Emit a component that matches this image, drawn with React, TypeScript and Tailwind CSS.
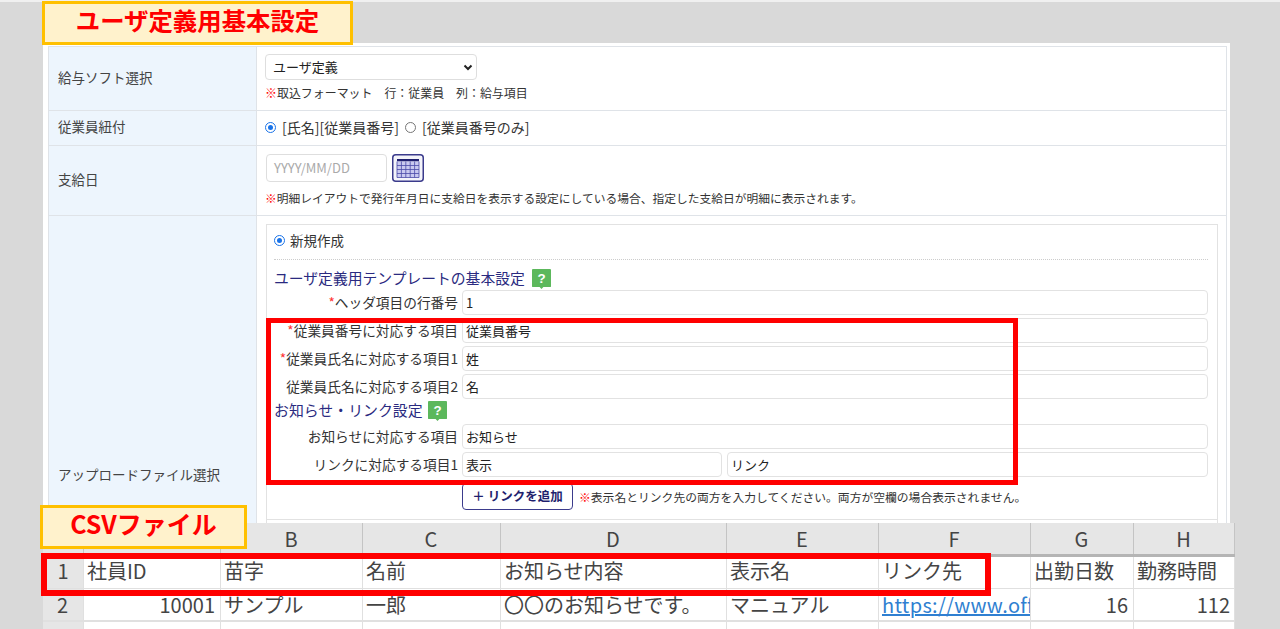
const jp = "font-['Noto_Sans_CJK_JP','Noto_Sans',sans-serif]";

function Help() {
  return (
    <svg width="19" height="21" viewBox="0 0 20 22" className="shrink-0">
      <path d="M1 0h18a1 1 0 0 1 1 1v17a1 1 0 0 1-1 1h-7l-2 2-2-2H1a1 1 0 0 1-1-1V1a1 1 0 0 1 1-1z" fill="#5cb85c" />
      <text x="10" y="15" textAnchor="middle" fontSize="14" fontWeight="700" fill="#fff" fontFamily="Liberation Sans">?</text>
    </svg>
  );
}

function CalendarIcon() {
  return (
    <svg width="32" height="28" viewBox="0 0 32 28" className="ml-[5px]">
      <rect x="0.75" y="0.75" width="30.5" height="26.5" rx="3" fill="#f4f4fa" stroke="#3b3b8c" strokeWidth="1.5" />
      <rect x="5" y="5" width="22" height="2.5" fill="#1f1f6e" />
      <rect x="5" y="7.5" width="22" height="16" fill="#c9c9f0" />
      <path d="M5 11.5h22M5 15.5h22M5 19.5h22M5 23.5h22M5 7.5v16M9.4 7.5v16M13.8 7.5v16M18.2 7.5v16M22.6 7.5v16M27 7.5v16" stroke="#4a4aa8" strokeWidth="0.8" fill="none" />
    </svg>
  );
}

function Radio({ on }: { on?: boolean }) {
  return (
    <span className={on ? "inline-block size-[11px] shrink-0 rounded-full border border-[#1a73e8] bg-white p-[2px]" : "inline-block size-[11px] shrink-0 rounded-full border border-[#767676] bg-white"}>
      {on && <span className="block size-full rounded-full bg-[#1a73e8]" />}
    </span>
  );
}

function Field({ label, req, value, second, mt }: { label: string; req?: boolean; value: string; second?: string; mt: string }) {
  return (
    <div className={`flex items-center ${mt}`}>
      <div className="w-[188px] shrink-0 whitespace-nowrap pr-1 pb-[1px] text-right text-[13.7px] leading-[24px] text-[#333]">
        {req && <span className="text-[#f33]">*</span>}
        {label}
      </div>
      <input readOnly defaultValue={value} className="h-[25px] min-w-0 flex-1 rounded-[4px] border border-[#e2e2e2] bg-white px-[3px] pb-[1px] text-[13px] text-[#222] outline-none" />
      {second && (
        <input readOnly defaultValue={second} className="ml-[5px] h-[25px] w-[481px] rounded-[4px] border border-[#e2e2e2] bg-white px-[3px] pb-[1px] text-[13px] text-[#222] outline-none" />
      )}
    </div>
  );
}

function Row({ label, h, children }: { label: string; h: string; children: React.ReactNode }) {
  return (
    <div className={`flex border-b border-[#dfe3e8] ${h}`}>
      <div className="flex w-[208px] shrink-0 items-center border-r border-[#dfe3e8] bg-[#edf5fd] pb-[3px] pl-[9px] text-[13.5px] text-[#444]">
        {label}
      </div>
      <div className="min-w-0 flex-1 bg-white pl-[8px]">{children}</div>
    </div>
  );
}

const cols = [
  { w: "w-[41px]", head: "", r1: "1", r2: "2", cls: "bg-[#e6e6e6] text-center" },
  { w: "w-[137px]", head: "A", r1: "社員ID", r2: "10001", cls: "pr-[5px] text-right" },
  { w: "w-[142px]", head: "B", r1: "苗字", r2: "サンプル", cls: "" },
  { w: "w-[138px]", head: "C", r1: "名前", r2: "一郎", cls: "" },
  { w: "w-[226px]", head: "D", r1: "お知らせ内容", r2: "〇〇のお知らせです。", cls: "" },
  { w: "w-[152px]", head: "E", r1: "表示名", r2: "マニュアル", cls: "" },
  { w: "w-[152px]", head: "F", r1: "リンク先", r2: "https://www.office", cls: "" },
  { w: "w-[103px]", head: "G", r1: "出勤日数", r2: "16", cls: "pr-[5px] text-right" },
  { w: "w-[101px]", head: "H", r1: "勤務時間", r2: "112", cls: "text-right" },
];

export default function App() {
  return (
    <div className={`relative h-[629px] w-full overflow-hidden bg-[#d9d9d9] pt-[43px] pl-[43px] ${jp}`}>
      <div className="absolute inset-x-0 top-0 h-[2px] bg-[#f0f0f0]" />

      {/* form panel */}
      <div className="h-[586px] w-[1187px] bg-white pt-[3px] pr-[3px] pl-[5px]">
        <div className="border-x border-t border-[#dfe3e8]">
          <Row label="給与ソフト選択" h="h-[64px]">
            <div className="mt-[7px] flex h-[26px] w-[212px] items-center justify-between rounded-[4px] border border-[#dedede] bg-white pr-[3px] pb-[1px] pl-[7px] text-[13px] text-[#222]">
              ユーザ定義
              <svg width="10" height="10" viewBox="0 0 10 10" fill="none" stroke="#222" strokeWidth="2"><path d="M1.5 3.5 5 7l3.5-3.5" /></svg>
            </div>
            <p className="mt-[5px] text-[11.95px] leading-[16px] whitespace-pre text-[#333]">
              <span className="font-bold text-[#f00]">※</span>取込フォーマット　行：従業員　列：給与項目
            </p>
          </Row>
          <Row label="従業員紐付" h="h-[35px]">
            <div className="flex h-full items-center pb-[2px] text-[14px] whitespace-pre text-[#333]">
              <Radio on />
              <span className="ml-[6px]">[氏名][従業員番号]</span>
              <span className="ml-[6px]"><Radio /></span>
              <span className="ml-[6px]">[従業員番号のみ]</span>
            </div>
          </Row>
          <Row label="支給日" h="h-[70px]">
            <div className="mt-[8px] ml-[1px] flex items-center">
              <div className="flex h-[28px] w-[121px] items-center rounded-[4px] border border-[#dedede] pl-[7px] text-[13px] text-[#aaa]">YYYY/MM/DD</div>
              <CalendarIcon />
            </div>
            <p className="mt-[8px] text-[11.75px] leading-[16px] text-[#333]">
              <span className="font-bold text-[#f00]">※</span>明細レイアウトで発行年月日に支給日を表示する設定にしている場合、指定した支給日が明細に表示されます。
            </p>
          </Row>
          <div className="flex h-[400px]">
            <div className="w-[208px] shrink-0 border-r border-[#dfe3e8] bg-[#edf5fd] pt-[248px] pl-[9px] text-[13.5px] text-[#444]">
              アップロードファイル選択
            </div>
            <div className="min-w-0 flex-1 bg-white pt-[8px] pl-[9px]">
              <div className="h-[320px] w-[952px] border border-[#e2e2e2] pr-[9px] pl-[7px]">
                <div className="flex h-[35px] items-center border-b border-dotted border-[#ccc] pb-[4px] text-[13.5px] text-[#333]">
                  <span className="mr-[5px]"><Radio on /></span>新規作成
                </div>
                <div className="mt-[8px] flex items-center text-[14.8px] leading-[20px] text-[#2a2a80]">
                  <span className="pb-[3px]">ユーザ定義用テンプレートの基本設定</span>
                  <span className="ml-[7px]"><Help /></span>
                </div>
                <Field mt="-mt-[1px]" req label="ヘッダ項目の行番号" value="1" />
                <Field mt="mt-[3px]" req label="従業員番号に対応する項目" value="従業員番号" />
                <Field mt="mt-[3px]" req label="従業員氏名に対応する項目1" value="姓" />
                <Field mt="mt-[3px]" label="従業員氏名に対応する項目2" value="名" />
                <div className="mt-[1px] flex items-center text-[14.9px] leading-[20px] text-[#2a2a80]">
                  <span className="pb-[2px]">お知らせ・リンク設定</span>
                  <span className="ml-[5px]"><Help /></span>
                </div>
                <Field mt="mt-[2px]" label="お知らせに対応する項目" value="お知らせ" />
                <Field mt="mt-[3px]" label="リンクに対応する項目1" value="表示" second="リンク" />
                <div className="mt-[6px] flex items-center pl-[188px]">
                  <div className="flex h-[27px] w-[111px] items-center justify-center rounded-[4px] border border-[#3b3b8c] pb-[1px] text-[12.5px] font-bold text-[#1f1f6e]">
                    ＋ リンクを追加
                  </div>
                  <p className="ml-[6px] text-[11.8px] whitespace-nowrap text-[#333]">
                    <span className="font-bold text-[#f00]">※</span>表示名とリンク先の両方を入力してください。両方が空欄の場合表示されません。
                  </p>
                </div>
                <div className="mt-[9px] -mr-[9px] -ml-[7px] border-b border-[#e2e2e2]" />
              </div>
            </div>
          </div>
        </div>
      </div>

      {/* spreadsheet pasted over the form */}
      <div className="absolute top-[523px] left-[43px] w-[1192px] bg-white text-[20px] text-[#444]">
        <div className="flex h-[34px] border-b-[3px] border-[#b5b5b5] bg-[#e6e6e6]">
          {cols.map((c) => (
            <div key={c.head} className={`${c.w} border-r border-[#c4c4c4] pr-[1px] text-center leading-[32px]`}>{c.head}</div>
          ))}
        </div>
        <div className="flex h-[32px] border-b border-[#e0e0e0]">
          {cols.map((c) => (
            <div key={c.head} className={`${c.w} overflow-hidden border-r border-[#e0e0e0] px-[3px] leading-[28px] whitespace-nowrap ${c.head === "" ? c.cls : ""}`}>{c.r1}</div>
          ))}
        </div>
        <div className="flex h-[33px] border-b-[2px] border-[#e0e0e0]">
          {cols.map((c) => (
            <div key={c.head} className={`${c.w} overflow-hidden border-r border-[#e0e0e0] pl-[3px] pr-[4px] leading-[31px] whitespace-nowrap ${c.cls} ${c.head === "F" ? "tracking-[0.3px] text-[#2f7fd1] underline" : ""}`}>{c.r2}</div>
          ))}
        </div>
        <div className="flex h-[8px]">
          {cols.map((c) => (
            <div key={c.head} className={`${c.w} border-r border-[#e0e0e0] ${c.head === "" ? "bg-[#e6e6e6]" : ""}`} />
          ))}
        </div>
      </div>

      {/* callouts */}
      <div className="absolute top-[1px] left-[42px] flex h-[44px] w-[311px] items-center justify-center border-[3px] border-[#ffc000] bg-[#fff2cc] pb-[6px] text-[24.4px] font-bold text-[#f00]">
        ユーザ定義用基本設定
      </div>
      <div className="absolute top-[505px] left-[40px] flex h-[44px] w-[207px] items-center justify-center border-[3px] border-[#ffc000] bg-[#fff2cc] pb-[6px] text-[25px] font-bold text-[#f00]">
        CSVファイル
      </div>
      <div className="absolute top-[318px] left-[266px] h-[167px] w-[752px] border-[5px] border-[#f00]" />
      <div className="absolute top-[553px] left-[41px] h-[43px] w-[950px] border-[6px] border-[#f00]" />
    </div>
  );
}
